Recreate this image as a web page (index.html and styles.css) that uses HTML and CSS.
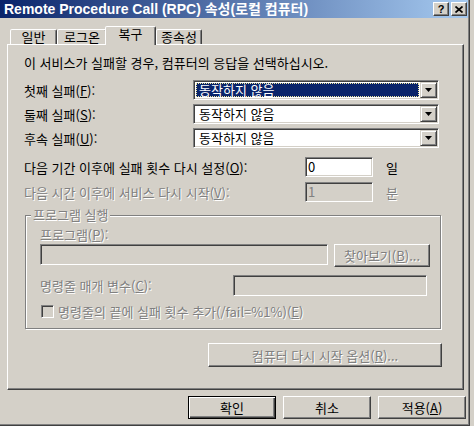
FILE: index.html
```html
<!DOCTYPE html>
<html lang="ko">
<head>
    <meta charset="UTF-8">
    <title>Remote Procedure Call (RPC) 속성(로컬 컴퓨터)</title>
    <link rel="stylesheet" href="styles.css">
</head>
<body>

    <div class="window">
        <!-- Title bar -->
        <div class="titlebar">
            <span class="title">Remote Procedure Call (RPC) 속성(로컬 컴퓨터)</span>
            <div class="caption-buttons">
                <span class="cap-btn help">?</span>
                <span class="cap-btn close">
                    <svg width="8" height="7" viewBox="0 0 8 7"><path d="M0.5 0.5L7.5 6.5M7.5 0.5L0.5 6.5" stroke="#000" stroke-width="1.7" fill="none"/></svg>
                </span>
            </div>
        </div>

        <!-- Tabs -->
        <div class="tabs">
            <div class="tab tab-general">일반</div>
            <div class="tab tab-logon">로그온</div>
            <div class="tab tab-recovery active">복구</div>
            <div class="tab tab-deps">종속성</div>
        </div>

        <div class="panel">
            <p class="intro">이 서비스가 실패할 경우, 컴퓨터의 응답을 선택하십시오.</p>

            <div class="row combo-row first">
                <span class="field-label">첫째 실패(<u>F</u>):</span>
                <div class="combo focused">
                    <span class="combo-text">동작하지 않음</span>
                    <span class="combo-arrow"><svg width="7" height="4" viewBox="0 0 7 4"><path d="M0 0H7L3.5 4Z" fill="#000"/></svg></span>
                </div>
            </div>
            <div class="row combo-row">
                <span class="field-label">둘째 실패(<u>S</u>):</span>
                <div class="combo">
                    <span class="combo-text">동작하지 않음</span>
                    <span class="combo-arrow"><svg width="7" height="4" viewBox="0 0 7 4"><path d="M0 0H7L3.5 4Z" fill="#000"/></svg></span>
                </div>
            </div>
            <div class="row combo-row">
                <span class="field-label">후속 실패(<u>U</u>):</span>
                <div class="combo">
                    <span class="combo-text">동작하지 않음</span>
                    <span class="combo-arrow"><svg width="7" height="4" viewBox="0 0 7 4"><path d="M0 0H7L3.5 4Z" fill="#000"/></svg></span>
                </div>
            </div>

            <div class="row num-row first">
                <span class="num-label">다음 기간 이후에 실패 횟수 다시 설정(<u>O</u>):</span>
                <div class="edit num-box">0</div>
                <span class="unit">일</span>
            </div>
            <div class="row num-row disabled">
                <span class="num-label">다음 시간 이후에 서비스 다시 시작(<u>V</u>):</span>
                <div class="edit num-box">1</div>
                <span class="unit">분</span>
            </div>

            <!-- Run program group -->
            <div class="group disabled">
                <span class="legend">프로그램 실행</span>
                <p class="group-label">프로그램(<u>P</u>):</p>
                <div class="row program-row">
                    <div class="edit path-box"></div>
                    <span class="btn browse">찾아보기(<u>B</u>)...</span>
                </div>
                <div class="row params-row">
                    <span class="params-label">명령줄 매개 변수(<u>C</u>):</span>
                    <div class="edit params-box"></div>
                </div>
                <div class="row check-row">
                    <span class="checkbox"></span>
                    <span class="check-label">명령줄의 끝에 실패 횟수 추가(/fail=%1%)(<u>E</u>)</span>
                </div>
            </div>

            <span class="btn restart disabled">컴퓨터 다시 시작 옵션(<u>R</u>)...</span>
        </div>

        <div class="actions">
            <span class="btn default">확인</span>
            <span class="btn">취소</span>
            <span class="btn">적용(<u>A</u>)</span>
        </div>
    </div>

</body>
</html>
```

FILE: styles.css
```css
/* Reset */
* {
    margin: 0;
    padding: 0;
    box-sizing: border-box;
}

body {
    width: 474px;
    height: 426px;
    overflow: hidden;
    background: #d4d0c8;
    font-family: "Noto Sans CJK KR", sans-serif;
    font-size: 13px;
    color: #000;
}

u { text-decoration: underline; text-underline-offset: 1px; }

/* Window frame */
.window {
    width: 470px;
    height: 426px;
    background: #d4d0c8;
    border-right: 1px solid #404040;
    border-bottom: 1px solid #404040;
    box-shadow: inset -1px -1px #808080;
}

/* Title bar */
.titlebar {
    width: 468px;
    height: 18px;
    display: flex;
    align-items: center;
    justify-content: space-between;
    padding: 0 1px 0 4px;
    background: linear-gradient(to right, #0a246a, #a6caf0);
}

.title {
    color: #fff;
    font-family: "Liberation Sans", "Noto Sans CJK KR", sans-serif;
    font-weight: bold;
    font-size: 14px;
    line-height: 18px;
    white-space: nowrap;
}

.caption-buttons {
    display: flex;
    gap: 2px;
}

.cap-btn {
    width: 16px;
    height: 14px;
    display: flex;
    align-items: center;
    justify-content: center;
    background: #d4d0c8;
    border: 1px solid;
    border-color: #fff #404040 #404040 #fff;
    box-shadow: inset -1px -1px #808080;
}

.cap-btn.help {
    font-family: "Liberation Sans", sans-serif;
    font-weight: bold;
    font-size: 11px;
    line-height: 12px;
}

/* Tabs */
.tabs {
    display: flex;
    align-items: flex-end;
    height: 18px;
    margin-top: 8px;
    padding-left: 10px;
}

.tab {
    height: 15px;
    border: 1px solid;
    border-bottom: 0;
    border-color: #fff #404040 transparent #fff;
    border-radius: 2px 2px 0 0;
    box-shadow: inset -1px 0 #808080;
    text-align: center;
    line-height: 14px;
    background: #d4d0c8;
}

.tab-general { width: 47px; }
.tab-logon { width: 50px; }
.tab-deps { width: 46px; }

.tab.active {
    width: 51px;
    height: 19px;
    margin: 0 0 -1px -2px;
    position: relative;
    z-index: 1;
    line-height: 14px;
}

/* Tab page */
.panel {
    margin-left: 7px;
    width: 457px;
    height: 346px;
    border: 1px solid;
    border-color: #fff #404040 #404040 #fff;
    box-shadow: inset -1px -1px #808080;
    padding: 11px 0 0 16px;
}

.intro { line-height: 14px; }

.row {
    display: flex;
    align-items: center;
}

/* Combo boxes */
.combo-row { height: 20px; margin-top: 4px; }
.combo-row.first { margin-top: 10px; }

.field-label { width: 169px; }

.combo {
    width: 246px;
    height: 20px;
    display: flex;
    align-items: center;
    padding: 0 1px 0 2px;
    background: #fff;
    border: 1px solid;
    border-color: #808080 #fff #fff #808080;
    box-shadow: inset 1px 1px #404040, inset -1px -1px #d4d0c8;
}

.combo-text {
    flex: 1;
    height: 14px;
    margin-right: 1px;
    padding-left: 2px;
    line-height: 12px;
    border: 1px solid transparent;
}

.combo.focused .combo-text {
    background: #0a246a;
    color: #fff;
    border: 1px dotted #f0e8a0;
}

.combo-arrow {
    width: 17px;
    height: 16px;
    display: flex;
    align-items: center;
    justify-content: center;
    background: #d4d0c8;
    border: 1px solid;
    border-color: #d4d0c8 #404040 #404040 #d4d0c8;
    box-shadow: inset 1px 1px #fff, inset -1px -1px #808080;
}

/* Edit boxes */
.edit {
    height: 20px;
    background: #fff;
    border: 1px solid;
    border-color: #808080 #fff #fff #808080;
    box-shadow: inset 1px 1px #404040, inset -1px -1px #d4d0c8;
    padding-left: 2px;
    line-height: 17px;
}

.num-row { height: 20px; margin-top: 5px; }
.num-row.first { margin-top: 9px; }

.num-label { width: 281px; }
.num-box { width: 68px; }
.unit { margin-left: 13px; }

.disabled .num-label,
.disabled .unit,
.group.disabled,
.btn.disabled,
.group.disabled .btn {
    color: #808080;
    text-shadow: 1px 1px 0 #fff;
}

.disabled .edit {
    background: #d4d0c8;
    color: #808080;
}

/* Group box */
.group {
    width: 416px;
    height: 114px;
    margin: 13px 0 0 1px;
    padding-left: 14px;
    border: 1px solid #808080;
    box-shadow: inset 1px 1px #fff, 1px 1px #fff;
}

.legend {
    display: block;
    width: fit-content;
    margin: -8px 0 0 -9px;
    padding: 0 2px;
    line-height: 14px;
    background: #d4d0c8;
}

.group-label { margin-top: 6px; line-height: 14px; }

.program-row {
    height: 23px;
    margin-top: 2px;
    align-items: flex-start;
}

.path-box { width: 288px; height: 21px; }

.params-row { height: 21px; margin-top: 8px; }
.params-label { width: 193px; }
.params-box { width: 194px; height: 21px; }

.check-row { height: 13px; margin-top: 9px; }

.checkbox {
    width: 13px;
    height: 13px;
    margin-left: 1px;
    border: 1px solid;
    border-color: #808080 #fff #fff #808080;
    box-shadow: inset 1px 1px #404040, inset -1px -1px #d4d0c8;
    background: #d4d0c8;
}

.check-label { margin-left: 4px; }

/* Push buttons */
.btn {
    display: flex;
    align-items: center;
    justify-content: center;
    height: 23px;
    background: #d4d0c8;
    border: 1px solid;
    border-color: #fff #404040 #404040 #fff;
    box-shadow: inset -1px -1px #808080;
    white-space: nowrap;
}

.browse { width: 96px; margin-left: 6px; }

.restart {
    width: 234px;
    height: 24px;
    margin: 14px 0 0 184px;
}

.actions {
    display: flex;
    gap: 7px;
    margin-top: 6px;
    padding-left: 188px;
}

.actions .btn { width: 88px; }

.btn.default {
    border-color: #000;
    box-shadow: inset 1px 1px #fff, inset -1px -1px #404040, inset -2px -2px #808080;
}
```
